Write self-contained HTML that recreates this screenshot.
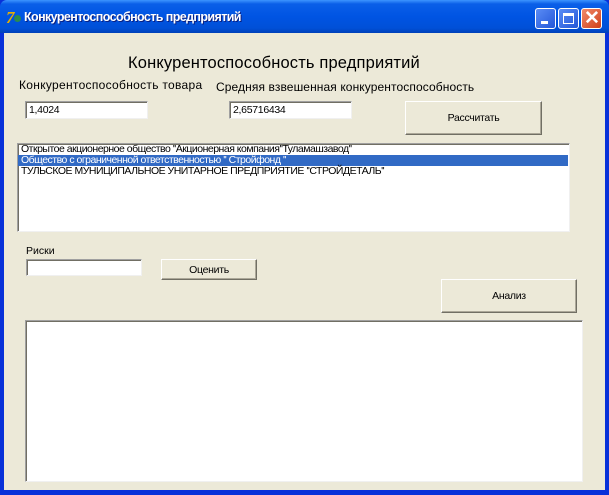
<!DOCTYPE html>
<html><head><meta charset="utf-8"><style>
*{margin:0;padding:0;box-sizing:border-box}
body{width:609px;height:495px;overflow:hidden;background:#0831d9;font-family:"Liberation Sans",sans-serif;position:relative}
.tb{position:absolute;left:0;top:0;width:609px;height:33px;background:linear-gradient(#3d95ff 0,#0a5fe8 12%,#0054e3 50%,#0050d8 85%,#0040b8 100%);border-radius:7px 7px 0 0}
.tt{position:absolute;left:24px;top:10px;color:#fff;font-weight:bold;font-size:12.5px;text-shadow:1px 1px #0a1f80;letter-spacing:-0.6px}
.wb{position:absolute;top:8px;width:21px;height:21px;border:1px solid #fff;border-radius:3px;background:linear-gradient(135deg,#5a8cf5,#2457d8)}
.client{position:absolute;left:4px;top:33px;width:601px;height:457px;background:#ece9d8}
.a{position:absolute}
.lbl{position:absolute;font-size:12px;color:#000;white-space:nowrap}
.ed{position:absolute;background:#fff;border:1px solid;border-color:#a0a0a0 #f0f0f0 #f0f0f0 #a0a0a0;box-shadow:inset 1px 1px #716f64;font-size:10.5px;padding:2px 0 0 3px;letter-spacing:-0.3px}
.bt{position:absolute;background:#ece9d8;border:1px solid;border-color:#fff #716f64 #716f64 #fff;box-shadow:inset -1px -1px #aca899;font-size:10.5px;display:flex;align-items:center;justify-content:center;letter-spacing:-0.3px}
.it{height:11px;line-height:11px;font-size:10.5px;padding-left:3px;white-space:nowrap;letter-spacing:-0.5px}
</style></head><body>
<div class="tb"></div>
<div class="a" style="left:6px;top:8px;font:bold italic 17px 'Liberation Serif',serif;color:#e8b000">7</div>
<div class="a" style="left:14px;top:15px;width:7px;height:7px;border-radius:50%;background:#2a8a50"></div>
<div class="tt">Конкурентоспособность предприятий</div>
<div class="wb" style="left:535px"><div class="a" style="left:5px;top:12px;width:7px;height:3px;background:#fff"></div></div>
<div class="wb" style="left:558px"><div class="a" style="left:4px;top:4px;width:11px;height:11px;border:1px solid #fff;border-top:3px solid #fff"></div></div>
<div class="wb" style="left:581px;background:linear-gradient(135deg,#f08a6a,#d0401a)"><div class="a" style="left:2px;top:-2px;color:#fff;font-size:19px;font-weight:bold">✕</div></div>
<div class="client"></div>
<div class="lbl" style="left:128px;top:54px;font-size:16.5px;letter-spacing:0.15px">Конкурентоспособность предприятий</div>
<div class="lbl" style="left:19px;top:78px;letter-spacing:0.3px">Конкурентоспособность товара</div>
<div class="lbl" style="left:216px;top:80px;letter-spacing:0.1px">Средняя взвешенная конкурентоспособность</div>
<div class="ed" style="left:25px;top:101px;width:123px;height:18px">1,4024</div>
<div class="ed" style="left:229px;top:101px;width:123px;height:18px">2,65716434</div>
<div class="bt" style="left:405px;top:101px;width:137px;height:34px">Рассчитать</div>
<div class="ed" style="left:17px;top:143px;width:553px;height:89px;padding:0">
<div class="it">Открытое акционерное общество ''Акционерная компания''Туламашзавод''</div>
<div class="it" style="background:#316ac5;color:#fff;width:550px">Общество с ограниченной ответственностью '' Стройфонд ''</div>
<div class="it">ТУЛЬСКОЕ МУНИЦИПАЛЬНОЕ УНИТАРНОЕ ПРЕДПРИЯТИЕ ''СТРОЙДЕТАЛЬ''</div>
</div>
<div class="lbl" style="left:26px;top:245px;font-size:10.5px">Риски</div>
<div class="ed" style="left:26px;top:259px;width:116px;height:17px"></div>
<div class="bt" style="left:161px;top:259px;width:96px;height:21px">Оценить</div>
<div class="bt" style="left:441px;top:279px;width:136px;height:34px">Анализ</div>
<div class="ed" style="left:25px;top:320px;width:558px;height:162px"></div>
</body></html>
